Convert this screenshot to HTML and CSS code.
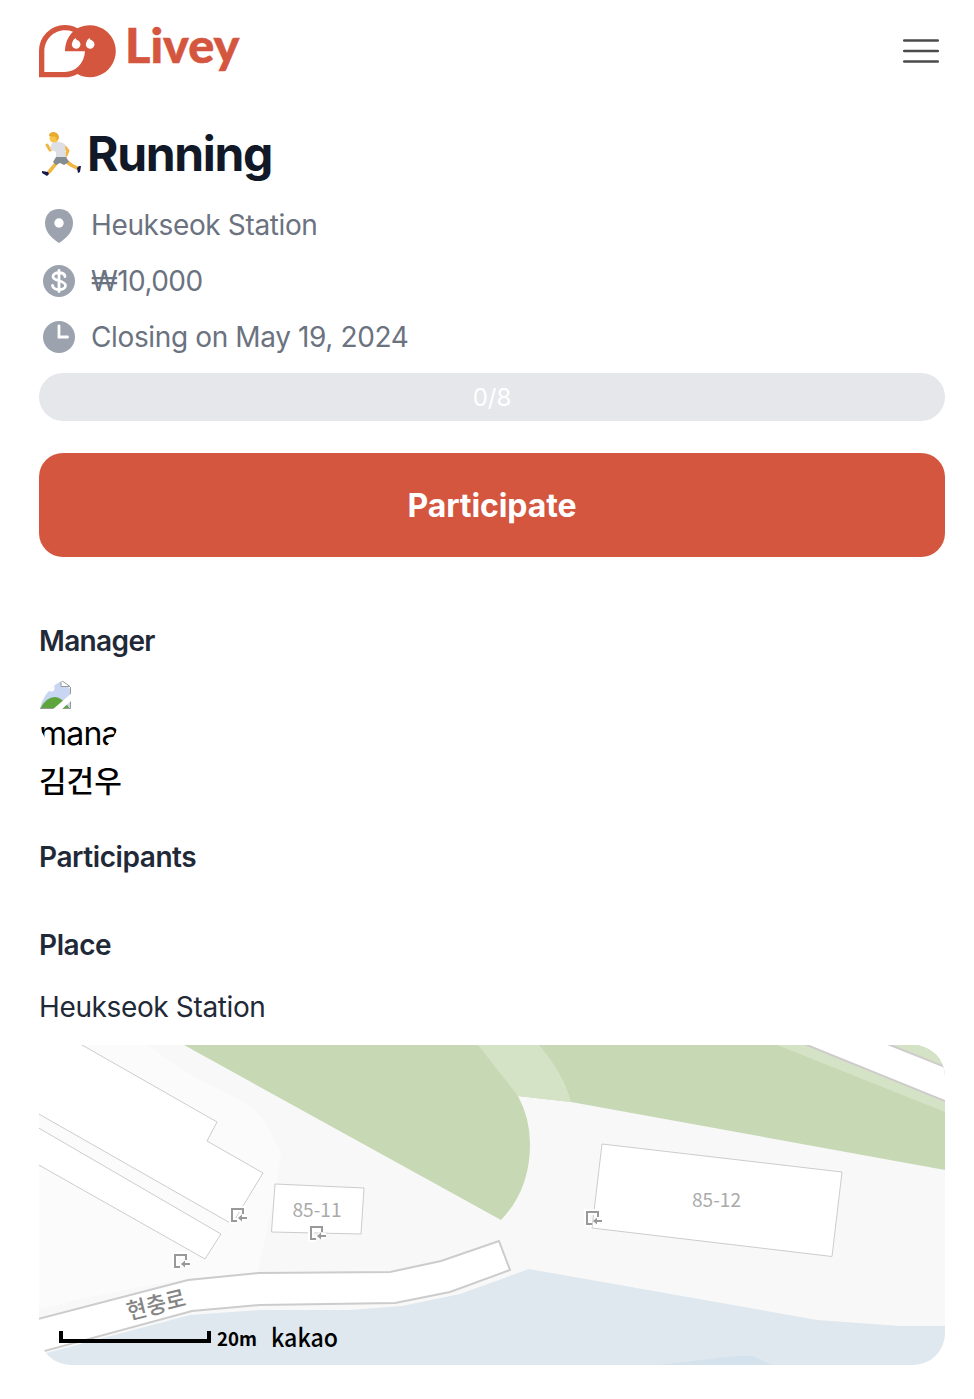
FILE: index.html
```html
<!DOCTYPE html>
<html lang="en">
<head>
<meta charset="utf-8">
<title>Livey</title>
<link rel="stylesheet" href="styles.css">
</head>
<body>
<header class="header">
  <svg class="logo" viewBox="0 0 203 54" role="img" aria-label="Livey">
    <g transform="scale(.33333) translate(-57 -44)">
      <path class="brand" d="M57 201V122A77 77 0 0 1 134 44Q155 44 172 54A78 78 0 1 1 172 191Q155 201 134 201Z"/>
      <path class="paper" d="M73 185V122C74 86 103 60 134 60Q148 60 159 64C144 78 135 99 135 123H195C193 160 166 185 134 185Z"/>
      <path class="paper" d="M167 83Q167 89 173 90A13 13 0 1 1 157 96Q158 88 167 83ZM209 83Q209 89 215 90A13 13 0 1 1 199 96Q200 88 209 83Z"/>
    </g>
    <text class="brand wordmark" x="86" y="38" textLength="114.500" lengthAdjust="spacingAndGlyphs">Livey</text>
  </svg>
  <svg class="menu" viewBox="0 0 36 26"><path d="M1.200 2.500H34.800M1.200 13H34.800M1.200 23.500H34.800"/></svg>
</header>
<main>
  <h1 class="title">
    <svg class="runner" viewBox="0 0 42 46">
      <path class="skin-line" d="M15 14L9 19L6 14M24 16L27 20L24 26"/>
      <path class="skin-line leg" d="M17 30L13 35L8 41M25 30L30 34L36 37"/>
      <path class="shirt" d="M11 12Q17 9 24 13L25 27L15 27L15 21L9 18Z"/>
      <path class="shorts" d="M15 26L25 26L28 31L23 34L19 32L15 34L12 31Z"/>
      <path class="shoe" d="M1 40L7 41L8 43L6 45L1 42ZM36 37L38 35L40 35L39 41L37 42Z"/>
      <circle class="skin" cx="13" cy="7" r="4.500"/>
      <path class="hair" d="M8 5Q8 1 13 1Q18 2 18 7L16 10L15 6Z"/>
    </svg><span>Running</span>
  </h1>
  <ul class="facts">
    <li><svg class="fact-icon" viewBox="0 0 40 40"><path d="M20 4C11.500 4 6 10 6 18C6 28 14 34 20 38C26 34 34 28 34 18C34 10 28.500 4 20 4Z"/><circle class="paper" cx="20" cy="18" r="4.700"/></svg><span class="f-place">Heukseok Station</span></li>
    <li><svg class="fact-icon" viewBox="0 0 40 40"><circle cx="20" cy="20" r="16"/><path class="cut" d="M20 9.500V30.500M26 15.500C25.500 10.500 14 10.500 14 15.500C14 20.500 26.500 19 26.500 24.500C26.500 30 14 30 13.500 24.500"/></svg><span class="f-price">₩10,000</span></li>
    <li><svg class="fact-icon" viewBox="0 0 40 40"><circle cx="20" cy="20" r="16"/><path class="cut" d="M20 9V20H28.500"/></svg><span class="f-date">Closing on May 19, 2024</span></li>
  </ul>
  <div class="progress"><span>0/8</span></div>
  <button class="participate"><span>Participate</span></button>
  <section class="manager">
    <h2>Manager</h2>
    <div class="avatar">
      <svg class="broken" viewBox="0 0 32 32">
        <path fill="#c8d6f4" d="M1 1H22L31 10V30H1Z"/>
        <circle fill="#fff" cx="12" cy="9" r="3.500"/>
        <path fill="#5da53c" d="M1 30Q7 18 16 18Q23 18 31 30Z"/>
        <path fill="#fff" stroke="#999" d="M22 1V7.500H31Z"/>
        <path fill="none" stroke="#999" d="M1 29.500H31.500V8"/>
        <path fill="#fff" d="M33 14V21L22 31H13Z"/>
      </svg>
      <span>mana</span>
    </div>
    <p class="name">김건우</p>
  </section>
  <section class="participants"><h2>Participants</h2></section>
  <section class="place">
    <h2>Place</h2>
    <p class="address">Heukseok Station</p>
    <svg class="map" viewBox="39 1045 906 320">
      <defs>
        <g id="entrance"><path fill="none" stroke="#fff" stroke-width="6" d="M6 13H1V1H12V5M16 10H8"/><path fill="none" stroke="#999" stroke-width="2" d="M6 13H1V1H12V6M16 10H9"/><path fill="#999" d="M11 6.500V13.500L7 10Z"/></g>
      </defs>
      <path fill="#f8f8f8" d="M39 1045H945V1365H39Z"/>
      <path fill="#fbfbfb" d="M39 1045H148Q180 1070 210 1085Q255 1105 265 1122L281 1152L277 1182L258 1272L190 1279Q110 1290 39 1310Z"/>
      <path fill="#c7d8b4" d="M184 1045H945V1170L571 1102L518 1096Q530 1118 530 1144Q530 1190 501 1220Z"/>
      <path fill="#d4e2c6" d="M478 1045H539Q564 1074 571 1102L518 1096ZM777 1045H945V1112Z"/>
      <path fill="#fff" stroke="#cfcbcb" stroke-width="2" d="M802 1043L950 1103V1069L885 1043Z"/>
      <g fill="#fff" stroke="#ccc">
        <path d="M30 1016L82 1045L217 1122L207 1141L263 1173L232 1224L30 1109Z"/>
        <path d="M30 1123L221 1234L205 1259L30 1160Z"/>
        <path d="M275 1184L364 1188L361 1234L271.500 1232Z"/>
        <path d="M602 1144L842 1172L832 1256.500L592 1228Z"/>
      </g>
      <path fill="#dee8ee" d="M39 1355L190 1315L260 1310L350 1310L402 1306L460 1294L529 1269L817 1320L900 1326H945V1365H39Z"/>
      <path fill="#d4e2ed" d="M660 1365L735 1356H753L771 1365Z"/>
      <path fill="#fff" stroke="#ccc" stroke-width="2" d="M30 1321L188 1280L258 1273L390 1272L441 1261L499 1241L510 1270L450 1292L395 1303L260 1305L192 1311L30 1355Z"/>
      <use href="#entrance" x="231" y="1208"/><use href="#entrance" x="174" y="1254"/><use href="#entrance" x="310" y="1226"/><use href="#entrance" x="586" y="1211"/>
      <g class="map-label"><text x="292.500" y="1216.500" textLength="49" lengthAdjust="spacingAndGlyphs">85-11</text><text x="692" y="1207" textLength="49" lengthAdjust="spacingAndGlyphs">85-12</text><text class="road" transform="translate(129 1320) rotate(-14)" textLength="60" lengthAdjust="spacingAndGlyphs">현충로</text></g>
      <path fill="none" stroke="#000" stroke-width="4" d="M61 1331V1341H209V1331"/>
      <text class="scale" x="217" y="1346" textLength="40" lengthAdjust="spacingAndGlyphs">20m</text>
      <text class="kakao" x="271" y="1347" textLength="67" lengthAdjust="spacingAndGlyphs">kakao</text>
    </svg>
  </section>
</main>
</body>
</html>
```
FILE: styles.css
```css
* { box-sizing: border-box; }
body { margin: 0; padding: 24px 29px 34px 39px; background: #fff; color: #1f2937; font: 28px/40px Inter, "Noto Sans CJK KR", sans-serif; }
h1, h2, p, ul { margin: 0; padding: 0; }
.header { display: flex; justify-content: space-between; align-items: flex-start; height: 107px; }
.logo { width: 203px; height: 54px; margin-top: 1px; overflow: visible; }
.brand { fill: #d4563f; }
.paper { fill: #fff; }
.wordmark { font: 900 47px Lato, sans-serif; stroke: #d4563f; stroke-width: .5; }
.menu { width: 36px; height: 26px; margin: 14px 6px 0 0; fill: none; stroke: #4b4b4b; stroke-width: 2.6; stroke-linecap: round; }
.title { display: flex; height: 48px; color: #111827; font-size: 48px; line-height: 46px; font-weight: 700; letter-spacing: -1.35px; }
.runner { width: 42px; height: 46px; margin: 0 4px 0 2px; }
.skin, .hair { fill: #f7c34b; }
.hair { fill: #e9aa2d; }
.skin-line { fill: none; stroke: #f1b640; stroke-width: 3; stroke-linejoin: round; stroke-linecap: round; }
.leg { stroke-width: 3.6; }
.shirt { fill: #dedfe4; }
.shorts { fill: #858b93; }
.shoe { fill: #17184b; }
.facts { display: grid; grid-auto-rows: 40px; row-gap: 16px; margin-top: 26px; list-style: none; color: #6b7280; }
.facts li { display: flex; align-items: center; gap: 12px; }
.f-place, .f-date, .address { letter-spacing: -.37px; }
.f-price { letter-spacing: -.55px; }
.fact-icon { width: 40px; height: 40px; fill: #9ca3af; }
.fact-icon .paper { fill: #fff; }
.fact-icon .cut { fill: none; stroke: #fff; stroke-width: 2.8; stroke-linecap: round; }
.progress { display: flex; justify-content: center; align-items: center; height: 48px; margin-top: 16px; padding-top: 2px; border-radius: 24px; background: #e5e7eb; color: #fff; font-size: 24px; }
.participate { display: block; width: 100%; height: 104px; margin-top: 32px; padding: 2px 0 0; border: 0; border-radius: 24px; background: #d4563f; color: #fff; font: 700 32px/48px Inter, sans-serif; letter-spacing: -.1px; }
h2 { font-size: 28px; line-height: 40px; font-weight: 600; letter-spacing: -.42px; }
.manager { margin-top: 64px; }
.manager h2 { letter-spacing: -.65px; }
.avatar { display: flex; flex-direction: column; width: 80px; height: 80px; margin-top: 16px; overflow: hidden; border-radius: 50%; color: #000; font-size: 32px; line-height: 48px; letter-spacing: -.8px; }
.broken { flex: none; width: 32px; height: 32px; margin-top: 2px; }
.avatar span { height: 46px; line-height: 46px; }
.name { height: 48px; color: #000; font: 500 30px/44px "Noto Sans CJK KR", sans-serif; }
.participants { margin-top: 32px; }
.place { margin-top: 48px; }
.address { margin-top: 22px; }
.map { display: block; width: 906px; height: 320px; margin-top: 18px; border-radius: 32px; }
.map-label { fill: #aaa; font: 19px "Noto Sans CJK KR", sans-serif; }
.road { fill: #858585; font-size: 23px; font-weight: 500; }
.scale { font: 700 19px "Noto Sans CJK KR", sans-serif; }
.kakao { font: 500 25px "Noto Sans CJK KR", sans-serif; }
```
